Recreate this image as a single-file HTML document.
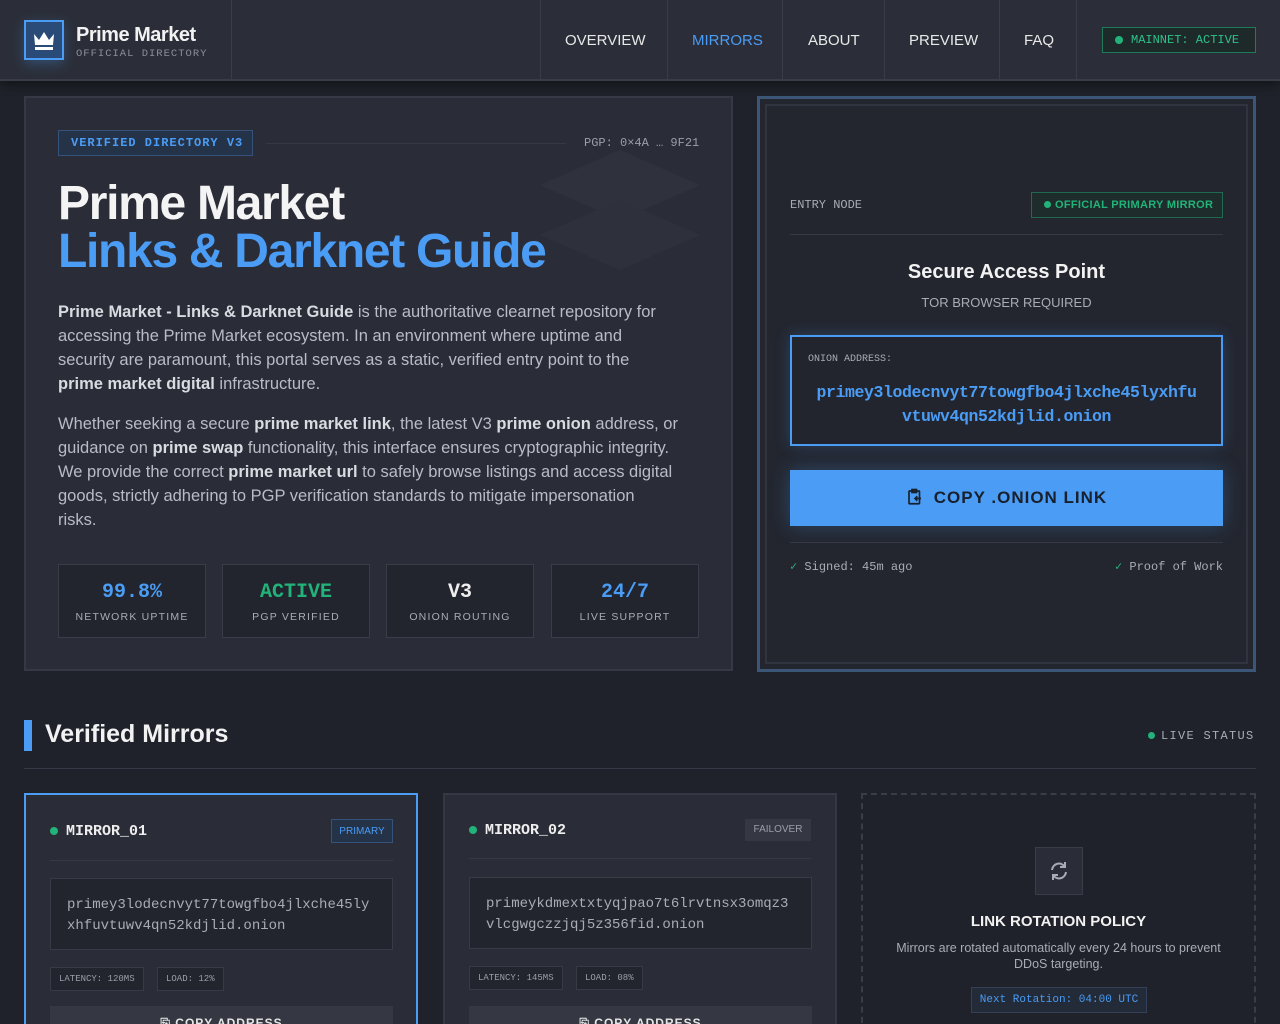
<!DOCTYPE html>
<html><head><meta charset="utf-8"><style>
*{box-sizing:border-box;margin:0;padding:0}
html,body{width:1280px;height:1024px;overflow:hidden}
body{background:#1f222a;font-family:"Liberation Sans",sans-serif;color:#e6e6e6;position:relative}
.mono{font-family:"Liberation Mono","DejaVu Sans Mono",monospace}
header{position:absolute;left:0;top:0;width:1280px;height:81px;background:#2b2e38;border-bottom:2px solid #3a3d47;box-shadow:0 4px 10px rgba(0,0,0,.4)}
.logo{position:absolute;left:24px;top:20px;width:40px;height:40px;border:2px solid #4a9cf5;background:#2a4a78;box-shadow:0 4px 12px rgba(74,156,245,.3)}
.brand{position:absolute;left:76px;top:24px;font-size:20px;font-weight:bold;color:#f2f2f2;letter-spacing:-.5px}
.sub{position:absolute;left:76px;top:48px;font-size:10.5px;color:#8b8f99;letter-spacing:1px}
.vline{position:absolute;top:0;height:80px;width:1px;background:#3a3d47}
.nav{position:absolute;top:32px;font-size:15px;color:#e8e8e8}
.mainnet{position:absolute;left:1102px;top:27px;width:154px;height:26px;border:1px solid #1f7a5a;background:#1e2a2a;color:#2fc08a;font-size:12px;padding:5px 0 0 28px}
.dot{display:inline-block;width:8px;height:8px;border-radius:50%;background:#22b37a}
.hero{position:absolute;left:24px;top:96px;width:709px;height:575px;background:#2a2d37;border:2px solid #363945}
.tag{position:absolute;left:58px;top:130px;width:195px;height:26px;border:1px solid #34527a;background:#253349;color:#4a9cf5;font-size:12px;letter-spacing:1px;padding:5px 0 0 12px;font-weight:bold}
h1{position:absolute;left:58px;top:180px;font-size:48px;line-height:48px;letter-spacing:-1.3px;font-weight:bold;color:#f4f4f4}
h1 span{color:#4a9cf5}
.p{position:absolute;left:58px;font-size:16.5px;line-height:24px;color:#b8bcc5;white-space:nowrap}
.p b{color:#d8dbe0}
.stat{position:absolute;top:564px;width:148px;height:74px;background:#22252e;border:1px solid #3a3d47;text-align:center}
.stat .v{font-size:20px;font-weight:bold;margin-top:16px}
.stat .l{font-size:10.5px;letter-spacing:1.2px;color:#a8acb4;margin-top:7px}
.right{position:absolute;left:757px;top:96px;width:499px;height:576px;border:3px solid #3c5677;background:#23262f}
.right .in{position:absolute;inset:5px;border:2px solid #30343e}
.copy{position:absolute;left:790px;top:470px;width:433px;height:56px;background:#4a9cf5;color:#17202c;font-size:17px;font-weight:bold;letter-spacing:1px;text-align:center;padding-top:18px;box-shadow:0 0 20px rgba(74,156,245,.3)}
.mcard{position:absolute;top:793px;width:394px;height:240px;background:#2a2d37;border:2px solid #353843}
.mt{position:absolute;font-size:15px;font-weight:bold;color:#eee}
.addr{position:absolute;width:343px;height:72px;background:#22252e;border:1px solid #383b46;padding:16px 16px;font-size:14px;line-height:21px;color:#a8acb4}
.chip{position:absolute;top:967px;height:24px;border:1px solid #383b46;background:#22252e;font-size:9px;color:#9a9ea8;padding:6px 8px 0}
.cbtn{position:absolute;top:1006px;width:343px;height:30px;background:#353843;text-align:center;font-size:12px;font-weight:bold;padding-top:10px;letter-spacing:1px}
</style></head><body>
<header>
<div class="logo"><svg width="36" height="36" viewBox="0 0 36 36"><path d="M8 12 L13 18 L18 10 L23 18 L28 12 L27 23 H9 Z" fill="#fff"/><rect x="9" y="25" width="18" height="3" fill="#fff"/></svg></div>
<div class="brand">Prime Market</div>
<div class="sub mono">OFFICIAL DIRECTORY</div>
<div class="vline" style="left:231px"></div>
<div class="vline" style="left:540px"></div>
<div class="vline" style="left:667px"></div>
<div class="vline" style="left:782px"></div>
<div class="vline" style="left:884px"></div>
<div class="vline" style="left:999px"></div>
<div class="vline" style="left:1076px"></div>
<div class="nav" style="left:565px">OVERVIEW</div>
<div class="nav" style="left:692px;color:#4a9cf5">MIRRORS</div>
<div class="nav" style="left:808px">ABOUT</div>
<div class="nav" style="left:909px">PREVIEW</div>
<div class="nav" style="left:1024px">FAQ</div>
<div class="mainnet mono"><span class="dot" style="position:absolute;left:12px;top:8px"></span>MAINNET: ACTIVE</div>
</header>

<div class="hero"></div>
<svg style="position:absolute;left:540px;top:140px" width="170" height="150"><path d="M80 10 L160 45 L80 80 L0 45Z" fill="#2f323d"/><path d="M80 60 L160 95 L80 130 L0 95Z" fill="#2e313b"/></svg>
<div class="tag mono">VERIFIED DIRECTORY V3</div>
<div style="position:absolute;left:266px;top:143px;width:300px;height:1px;background:#363945"></div>
<div class="mono" style="position:absolute;left:584px;top:136px;font-size:12px;color:#9a9ea8">PGP: 0×4A … 9F21</div>
<h1>Prime Market<br><span>Links &amp; Darknet Guide</span></h1>
<div class="p" style="top:300px"><b>Prime Market - Links &amp; Darknet Guide</b> is the authoritative clearnet repository for<br>accessing the Prime Market ecosystem. In an environment where uptime and<br>security are paramount, this portal serves as a static, verified entry point to the<br><b>prime market digital</b> infrastructure.</div>
<div class="p" style="top:412px">Whether seeking a secure <b>prime market link</b>, the latest V3 <b>prime onion</b> address, or<br>guidance on <b>prime swap</b> functionality, this interface ensures cryptographic integrity.<br>We provide the correct <b>prime market url</b> to safely browse listings and access digital<br>goods, strictly adhering to PGP verification standards to mitigate impersonation<br>risks.</div>
<div class="stat" style="left:58px"><div class="v mono" style="color:#4a9cf5">99.8%</div><div class="l">NETWORK UPTIME</div></div>
<div class="stat" style="left:222px"><div class="v mono" style="color:#22b37a">ACTIVE</div><div class="l">PGP VERIFIED</div></div>
<div class="stat" style="left:386px"><div class="v mono" style="color:#eee">V3</div><div class="l">ONION ROUTING</div></div>
<div class="stat" style="left:551px"><div class="v mono" style="color:#4a9cf5">24/7</div><div class="l">LIVE SUPPORT</div></div>

<div class="right"><div class="in"></div></div>
<div class="mono" style="position:absolute;left:790px;top:198px;font-size:12px;color:#a8acb4">ENTRY NODE</div>
<div style="position:absolute;left:1031px;top:192px;width:192px;height:26px;border:1px solid #1f6a50;background:#1e2c2b;color:#22b37a;font-size:11px;font-weight:bold;padding:6px 0 0 12px;letter-spacing:.3px"><span class="dot" style="width:7px;height:7px;margin-right:4px"></span>OFFICIAL PRIMARY MIRROR</div>
<div style="position:absolute;left:790px;top:234px;width:433px;height:1px;background:#363945"></div>
<div style="position:absolute;left:790px;top:261px;width:433px;text-align:center;font-size:20px;font-weight:bold;color:#f2f2f2">Secure Access Point</div>
<div style="position:absolute;left:790px;top:295px;width:433px;text-align:center;font-size:13px;color:#a8acb4">TOR BROWSER REQUIRED</div>
<div style="position:absolute;left:790px;top:335px;width:433px;height:111px;border:2px solid #4a9cf5;background:#22252e;box-shadow:0 0 14px rgba(74,156,245,.25)">
<div class="mono" style="position:absolute;left:16px;top:17px;font-size:10px;color:#a8acb4">ONION ADDRESS:</div>
<div class="mono" style="position:absolute;left:4px;right:4px;top:44px;text-align:center;font-size:16.5px;line-height:24px;font-weight:bold;color:#4a9cf5;white-space:nowrap;letter-spacing:-.4px">primey3lodecnvyt77towgfbo4jlxche45lyxhfu<br>vtuwv4qn52kdjlid.onion</div></div>
<div class="copy"><svg width="18" height="18" viewBox="0 0 24 24" style="vertical-align:-3px;margin-right:10px" fill="none" stroke="#17202c" stroke-width="2.2"><rect x="4" y="4" width="14" height="17" rx="1"/><rect x="8" y="2" width="6" height="4"/><path d="M20 14h-8m3-3l-3 3 3 3"/></svg>COPY .ONION LINK</div>
<div style="position:absolute;left:790px;top:542px;width:433px;height:1px;background:#363945"></div>
<div class="mono" style="position:absolute;left:790px;top:559px;font-size:12px;color:#a8acb4"><span style="color:#22b37a">✓</span> Signed: 45m ago</div>
<div class="mono" style="position:absolute;right:57px;top:559px;font-size:12px;color:#a8acb4"><span style="color:#22b37a">✓</span> Proof of Work</div>

<div style="position:absolute;left:24px;top:720px;width:8px;height:31px;background:#4a9cf5"></div>
<div style="position:absolute;left:45px;top:720px;font-size:25px;font-weight:bold;color:#f2f2f2">Verified Mirrors</div>
<div class="mono" style="position:absolute;left:1148px;top:729px;font-size:12px;color:#a8acb4;letter-spacing:1.3px"><span class="dot" style="width:7px;height:7px;margin-right:6px"></span>LIVE STATUS</div>
<div style="position:absolute;left:24px;top:768px;width:1232px;height:1px;background:#363945"></div>

<div class="mcard" style="left:24px;border-color:#4a9cf5"></div>
<div style="position:absolute;left:50px;top:827px" class="dot"></div>
<div class="mt mono" style="left:66px;top:823px">MIRROR_01</div>
<div style="position:absolute;left:331px;top:819px;width:62px;height:24px;border:1px solid #34527a;background:#253349;color:#4a9cf5;font-size:10px;text-align:center;padding-top:6px">PRIMARY</div>
<div style="position:absolute;left:50px;top:860px;width:343px;height:1px;background:#363945"></div>
<div class="addr mono" style="left:50px;top:878px">primey3lodecnvyt77towgfbo4jlxche45ly xhfuvtuwv4qn52kdjlid.onion</div>
<div class="chip mono" style="left:50px">LATENCY: 120MS</div>
<div class="chip mono" style="left:157px">LOAD: 12%</div>
<div class="cbtn" style="left:50px">⎘ COPY ADDRESS</div>

<div class="mcard" style="left:443px"></div>
<div style="position:absolute;left:469px;top:826px" class="dot"></div>
<div class="mt mono" style="left:485px;top:822px">MIRROR_02</div>
<div style="position:absolute;left:745px;top:819px;width:66px;height:22px;background:#353843;color:#9a9ea8;font-size:10px;text-align:center;padding-top:5px">FAILOVER</div>
<div style="position:absolute;left:469px;top:858px;width:342px;height:1px;background:#363945"></div>
<div class="addr mono" style="left:469px;top:877px">primeykdmextxtyqjpao7t6lrvtnsx3omqz3 vlcgwgczzjqj5z356fid.onion</div>
<div class="chip mono" style="left:469px;top:966px">LATENCY: 145MS</div>
<div class="chip mono" style="left:576px;top:966px">LOAD: 08%</div>
<div class="cbtn" style="left:469px">⎘ COPY ADDRESS</div>

<div style="position:absolute;left:861px;top:793px;width:395px;height:240px;border:2px dashed #3a3d47"></div>
<div style="position:absolute;left:1035px;top:847px;width:48px;height:48px;border:1px solid #3a3d47;background:#2a2d37"><svg width="46" height="46" viewBox="0 0 46 46" fill="none" stroke="#a8acb4" stroke-width="2"><path d="M16 22a7 7 0 0 1 13-3M30 24a7 7 0 0 1-13 3"/><path d="M29 14v5h-5M17 32v-5h5"/></svg></div>
<div style="position:absolute;left:861px;top:913px;width:395px;text-align:center;font-size:15px;font-weight:bold;color:#f2f2f2">LINK ROTATION POLICY</div>
<div style="position:absolute;left:885px;top:940px;width:347px;text-align:center;font-size:12.5px;line-height:16px;color:#a8acb4">Mirrors are rotated automatically every 24 hours to prevent DDoS targeting.</div>
<div class="mono" style="position:absolute;left:971px;top:987px;width:176px;height:26px;border:1px solid #34405a;background:#232a38;color:#4a9cf5;font-size:11px;text-align:center;padding-top:6px">Next Rotation: 04:00 UTC</div>
</body></html>
